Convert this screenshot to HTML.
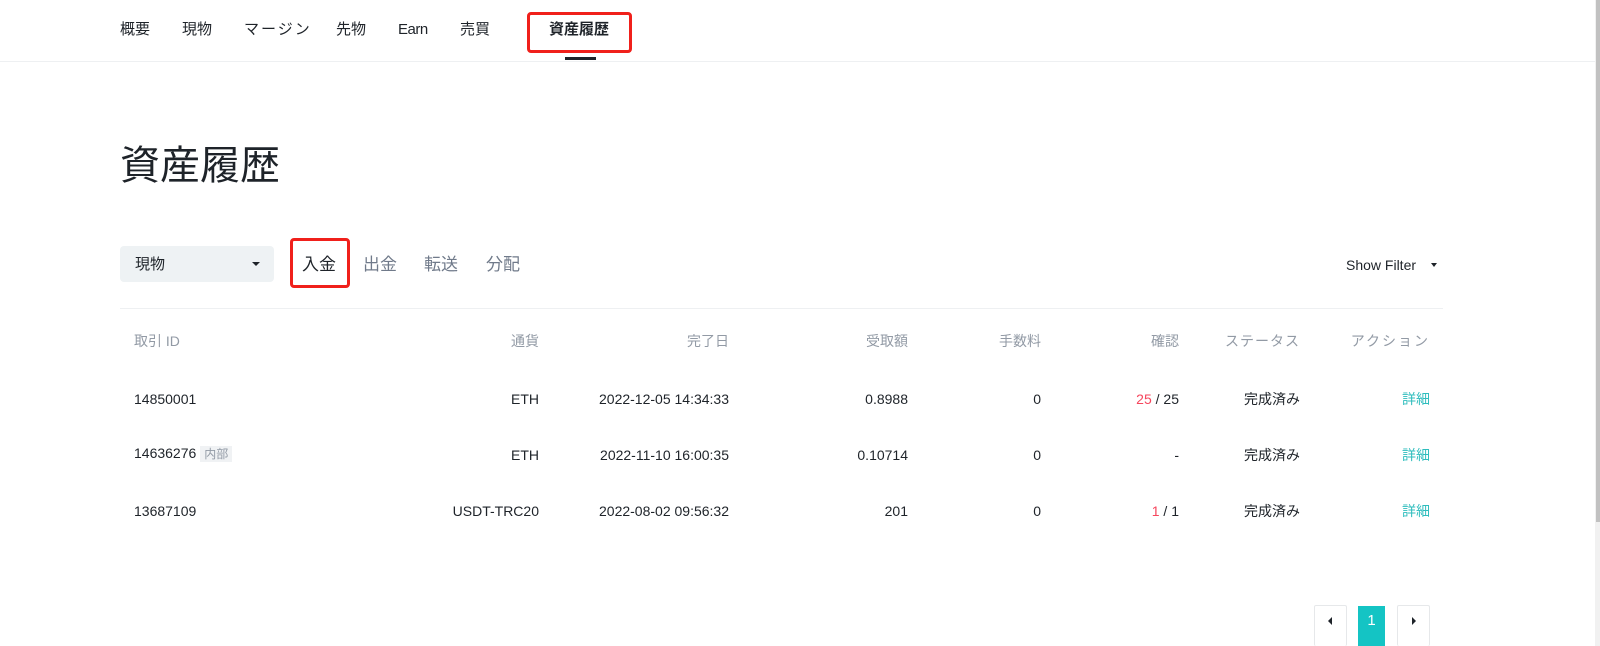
<!DOCTYPE html>
<html><head><meta charset="utf-8"><style>
*{margin:0;padding:0;box-sizing:border-box}
body{width:1600px;height:646px;overflow:hidden;background:#fff;font-family:"Liberation Sans","Noto Sans CJK JP",sans-serif;color:#1e2329;position:relative}
.a{position:absolute;white-space:nowrap;line-height:20px}
.nav{top:20px;font-size:15px;color:#1e2329}
.th{top:331px;font-size:14px;color:#929aa5}
.td{font-size:14px;color:#1e2329}
.r{text-align:right}
.red{color:#f6465d}
.teal{color:#2ebdbd}
.tab{top:255px;font-size:17px;color:#707a8a}
.pg{top:605px;height:41px;border:1px solid #e6e8ea;border-radius:2px;border-bottom:none}
</style></head><body>
<div class="a nav" style="left:120px">概要</div>
<div class="a nav" style="left:182px">現物</div>
<div class="a nav" style="left:244px;letter-spacing:2px">マージン</div>
<div class="a nav" style="left:336px">先物</div>
<div class="a nav" style="left:398px;letter-spacing:-0.5px">Earn</div>
<div class="a nav" style="left:460px">売買</div>
<div class="a nav" style="left:549px;font-weight:bold">資産履歴</div>
<div class="a" style="left:527px;top:12px;width:105px;height:41px;border:3px solid #f0201b;border-radius:4px"></div>
<div class="a" style="left:565px;top:57px;width:31px;height:3px;background:#1e2329"></div>
<div class="a" style="left:0;top:61px;width:1595px;height:1px;background:#eef0f2"></div>

<div class="a" style="left:120px;top:142px;font-size:40px;line-height:48px;color:#1e2329">資産履歴</div>

<div class="a" style="left:120px;top:246px;width:154px;height:36px;background:#eef2f4;border-radius:4px"></div>
<div class="a" style="left:135px;top:255px;font-size:15px">現物</div>
<div class="a" style="left:252px;top:262px;width:0;height:0;border-left:4px solid transparent;border-right:4px solid transparent;border-top:4px solid #1e2329"></div>
<div class="a tab" style="left:302px;color:#1e2329">入金</div>
<div class="a" style="left:290px;top:238px;width:60px;height:50px;border:3px solid #f0201b;border-radius:4px"></div>
<div class="a tab" style="left:363px">出金</div>
<div class="a tab" style="left:424px">転送</div>
<div class="a tab" style="left:486px">分配</div>
<div class="a" style="left:1346px;top:255px;font-size:14px">Show Filter</div>
<div class="a" style="left:1431px;top:263px;width:0;height:0;border-left:3.5px solid transparent;border-right:3.5px solid transparent;border-top:4px solid #1e2329"></div>
<div class="a" style="left:120px;top:308px;width:1323px;height:1px;background:#eef0f2"></div>

<div class="a th" style="left:134px">取引 ID</div>
<div class="a th r" style="right:1061px">通貨</div>
<div class="a th r" style="right:871px">完了日</div>
<div class="a th r" style="right:692px">受取額</div>
<div class="a th r" style="right:559px">手数料</div>
<div class="a th r" style="right:421px">確認</div>
<div class="a th r" style="right:300px;letter-spacing:1px">ステータス</div>
<div class="a th r" style="right:170px;letter-spacing:2px">アクション</div>

<div class="a td" style="left:134px;top:389px">14850001</div>
<div class="a td r" style="right:1061px;top:389px">ETH</div>
<div class="a td r" style="right:871px;top:389px">2022-12-05 14:34:33</div>
<div class="a td r" style="right:692px;top:389px">0.8988</div>
<div class="a td r" style="right:559px;top:389px">0</div>
<div class="a td r" style="right:421px;top:389px"><span class="red">25</span> / 25</div>
<div class="a td r" style="right:300px;top:389px">完成済み</div>
<div class="a td r teal" style="right:170px;top:389px">詳細</div>

<div class="a td" style="left:134px;top:443px">14636276 <span style="font-size:12px;color:#929aa5;background:#f0f2f4;padding:1px 4px">内部</span></div>
<div class="a td r" style="right:1061px;top:445px">ETH</div>
<div class="a td r" style="right:871px;top:445px">2022-11-10 16:00:35</div>
<div class="a td r" style="right:692px;top:445px">0.10714</div>
<div class="a td r" style="right:559px;top:445px">0</div>
<div class="a td r" style="right:421px;top:445px">-</div>
<div class="a td r" style="right:300px;top:445px">完成済み</div>
<div class="a td r teal" style="right:170px;top:445px">詳細</div>

<div class="a td" style="left:134px;top:501px">13687109</div>
<div class="a td r" style="right:1061px;top:501px">USDT-TRC20</div>
<div class="a td r" style="right:871px;top:501px">2022-08-02 09:56:32</div>
<div class="a td r" style="right:692px;top:501px">201</div>
<div class="a td r" style="right:559px;top:501px">0</div>
<div class="a td r" style="right:421px;top:501px"><span class="red">1</span> / 1</div>
<div class="a td r" style="right:300px;top:501px">完成済み</div>
<div class="a td r teal" style="right:170px;top:501px">詳細</div>

<div class="a pg" style="left:1314px;width:33px"><div class="a" style="left:13px;top:11px;border-top:4px solid transparent;border-bottom:4px solid transparent;border-right:4px solid #1e2329"></div></div>
<div class="a" style="left:1358px;top:606px;width:27px;height:40px;background:#14c4c4;color:#fff;font-size:15px;text-align:center;line-height:30px">1</div>
<div class="a pg" style="left:1397px;width:33px"><div class="a" style="left:14px;top:11px;border-top:4px solid transparent;border-bottom:4px solid transparent;border-left:4px solid #1e2329"></div></div>

<div class="a" style="left:1595px;top:0;width:5px;height:646px;background:#f1f1f1"></div>
<div class="a" style="left:1596px;top:0;width:4px;height:522px;background:#c1c1c1"></div>
</body></html>
